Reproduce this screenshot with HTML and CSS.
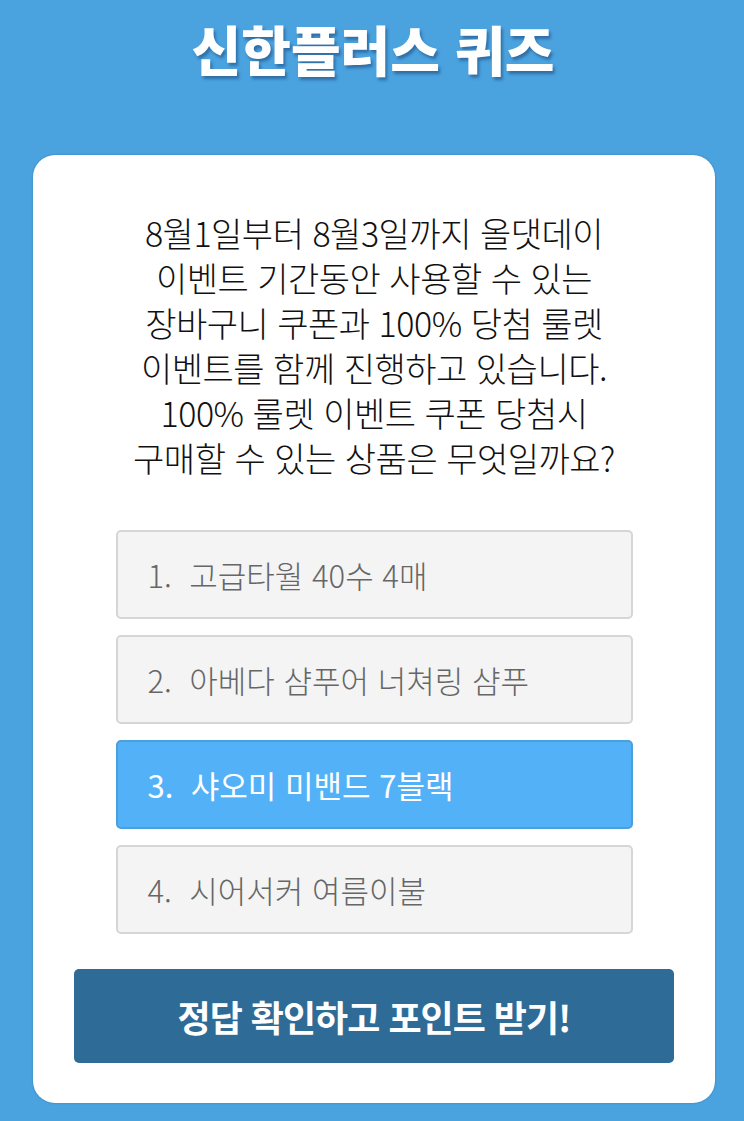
FILE: index.html
```html
<!DOCTYPE html>
<html lang="ko">
<head>
<meta charset="utf-8">
<title>신한플러스 퀴즈</title>
<link rel="stylesheet" href="styles.css">
</head>
<body>
<header class="header">
  <h1 class="title">신한플러스 퀴즈</h1>
</header>
<main class="card">
  <p class="question">8월1일부터 8월3일까지 올댓데이<br>이벤트 기간동안 사용할 수 있는<br>장바구니 쿠폰과 100% 당첨 룰렛<br>이벤트를 함께 진행하고 있습니다.<br>100% 룰렛 이벤트 쿠폰 당첨시<br>구매할 수 있는 상품은 무엇일까요?</p>
  <ul class="options">
    <li class="option">1.&nbsp; 고급타월 40수 4매</li>
    <li class="option">2.&nbsp; 아베다 샴푸어 너쳐링 샴푸</li>
    <li class="option option-selected">3.&nbsp; 샤오미 미밴드 7블랙</li>
    <li class="option">4.&nbsp; 시어서커 여름이불</li>
  </ul>
  <button class="submit" type="button">정답 확인하고 포인트 받기!</button>
</main>
</body>
</html>
```

FILE: styles.css
```css
html, body {
  margin: 0;
  padding: 0;
}
body {
  background: #4aa2df;
  font-family: "Noto Sans CJK KR", "Noto Sans", sans-serif;
  width: 744px;
  height: 1121px;
  overflow: hidden;
}
.header {
  height: 155px;
  display: flex;
  justify-content: center;
  align-items: flex-start;
}
.title {
  margin: 14px 0 0 2px;
  color: #ffffff;
  font-size: 54px;
  font-weight: 900;
  letter-spacing: 0;
  line-height: 70px;
  text-shadow: 2px 3px 3px rgba(25, 70, 120, 0.55);
}
.card {
  margin-left: 33px;
  width: 682px;
  height: 948px;
  box-sizing: border-box;
  background: #ffffff;
  border-radius: 22px;
  box-shadow: 0 0 2px rgba(20, 70, 120, 0.45);
  padding: 55px 0 0 0;
  display: flex;
  flex-direction: column;
  align-items: center;
}
.question {
  margin: 0;
  color: #111111;
  font-size: 34px;
  line-height: 45px;
  font-weight: 300;
  letter-spacing: -0.5px;
  text-align: center;
}
.options {
  list-style: none;
  margin: 50px 0 0 0;
  padding: 0;
  display: flex;
  flex-direction: column;
  gap: 16px;
}
.option {
  width: 517px;
  height: 89px;
  box-sizing: border-box;
  border: 2px solid #d6d6d6;
  border-radius: 5px;
  background: #f4f4f4;
  color: #666666;
  font-size: 31px;
  font-weight: 300;
  letter-spacing: 0;
  padding-left: 30px;
  display: flex;
  align-items: center;
}
.option-selected {
  background: #53b2f7;
  border-color: #4a9fdd;
  color: #ffffff;
  font-weight: 400;
}
.submit {
  margin-top: 35px;
  width: 600px;
  height: 94px;
  border: none;
  border-radius: 5px;
  background: #2e6c97;
  color: #ffffff;
  font-family: "Noto Sans CJK KR", "Noto Sans", sans-serif;
  font-size: 36px;
  font-weight: 700;
  letter-spacing: -1px;
  padding: 0;
}
```
